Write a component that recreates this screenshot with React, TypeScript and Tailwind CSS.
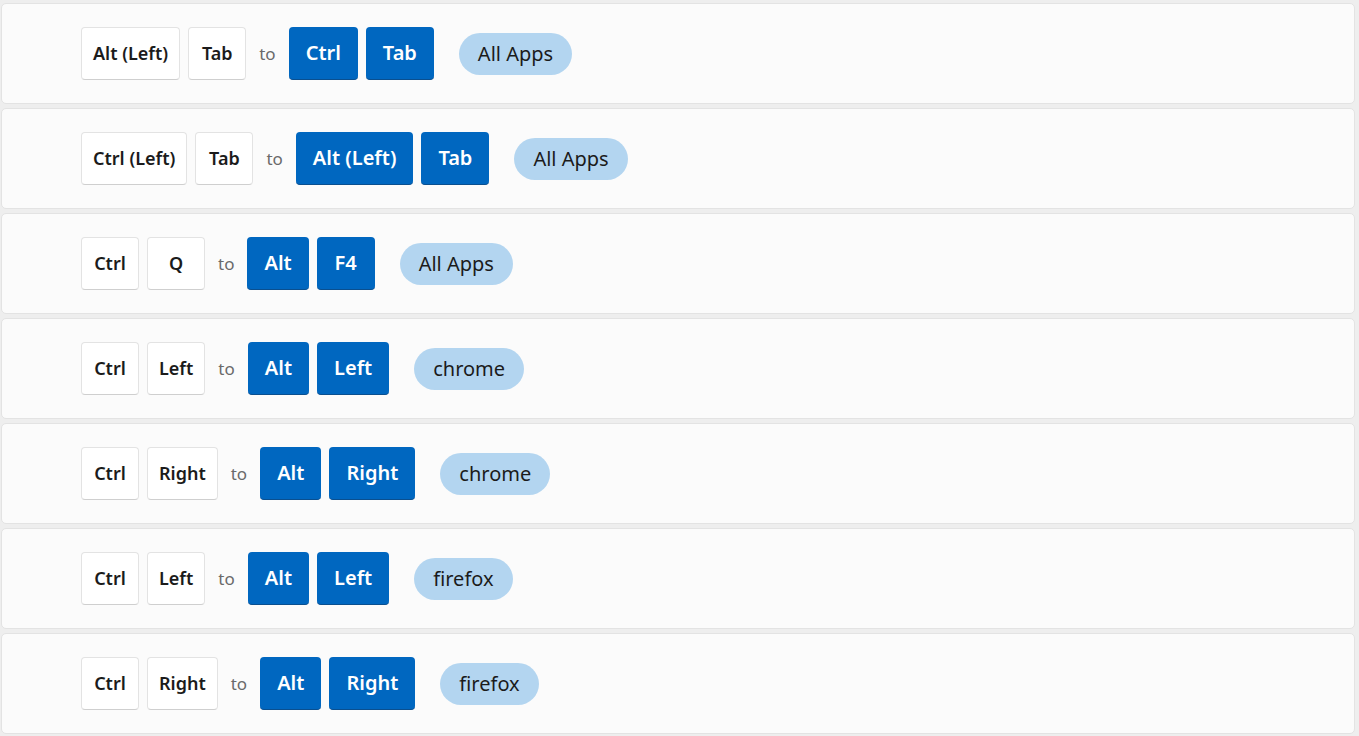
import React from "react";

type Row = { from: string[]; to: string[]; app: string };

const rows: Row[] = [
  { from: ["Alt (Left)", "Tab"], to: ["Ctrl", "Tab"], app: "All Apps" },
  { from: ["Ctrl (Left)", "Tab"], to: ["Alt (Left)", "Tab"], app: "All Apps" },
  { from: ["Ctrl", "Q"], to: ["Alt", "F4"], app: "All Apps" },
  { from: ["Ctrl", "Left"], to: ["Alt", "Left"], app: "chrome" },
  { from: ["Ctrl", "Right"], to: ["Alt", "Right"], app: "chrome" },
  { from: ["Ctrl", "Left"], to: ["Alt", "Left"], app: "firefox" },
  { from: ["Ctrl", "Right"], to: ["Alt", "Right"], app: "firefox" },
];

function FromKey({ label }: { label: string }) {
  return (
    <div className="h-[53px] min-w-[58px] px-[11px] flex items-center justify-center bg-white rounded-[4px] border border-[#e3e3e3] border-b-[#cfcfcf] text-[18px] font-semibold text-[#1b1b1b]">
      {label}
    </div>
  );
}

function ToKey({ label }: { label: string }) {
  return (
    <div className="h-[53px] min-w-[58px] px-[17px] flex items-center justify-center bg-[#0067c0] rounded-[4px] border-b border-b-[#0a4f8f] text-[20px] font-semibold text-white">
      {label}
    </div>
  );
}

export default function App() {
  return (
    <div
      className="w-[1359px] h-[736px] bg-[#eeeeee] pt-[3px] pl-[1px] pr-[4px] flex flex-col gap-[4px] overflow-hidden"
      style={{ fontFamily: '"Noto Sans", "Open Sans", sans-serif' }}
    >
      {rows.map((r, i) => (
        <div
          key={i}
          className="h-[101px] shrink-0 bg-[#fbfbfb] border border-[#e3e3e3] rounded-[5px] flex items-center pl-[79px]"
        >
          <div className="flex items-center gap-[8px]">
            {r.from.map((k, j) => (
              <FromKey key={j} label={k} />
            ))}
          </div>
          <span className="mx-[13px] text-[17px] text-[#6a6a6a]">to</span>
          <div className="flex items-center gap-[8px]">
            {r.to.map((k, j) => (
              <ToKey key={j} label={k} />
            ))}
          </div>
          <div className="ml-[25px] h-[42px] px-[19px] flex items-center rounded-full bg-[#b3d5f0] text-[20px] text-[#1b1b1b]">
            {r.app}
          </div>
        </div>
      ))}
    </div>
  );
}
